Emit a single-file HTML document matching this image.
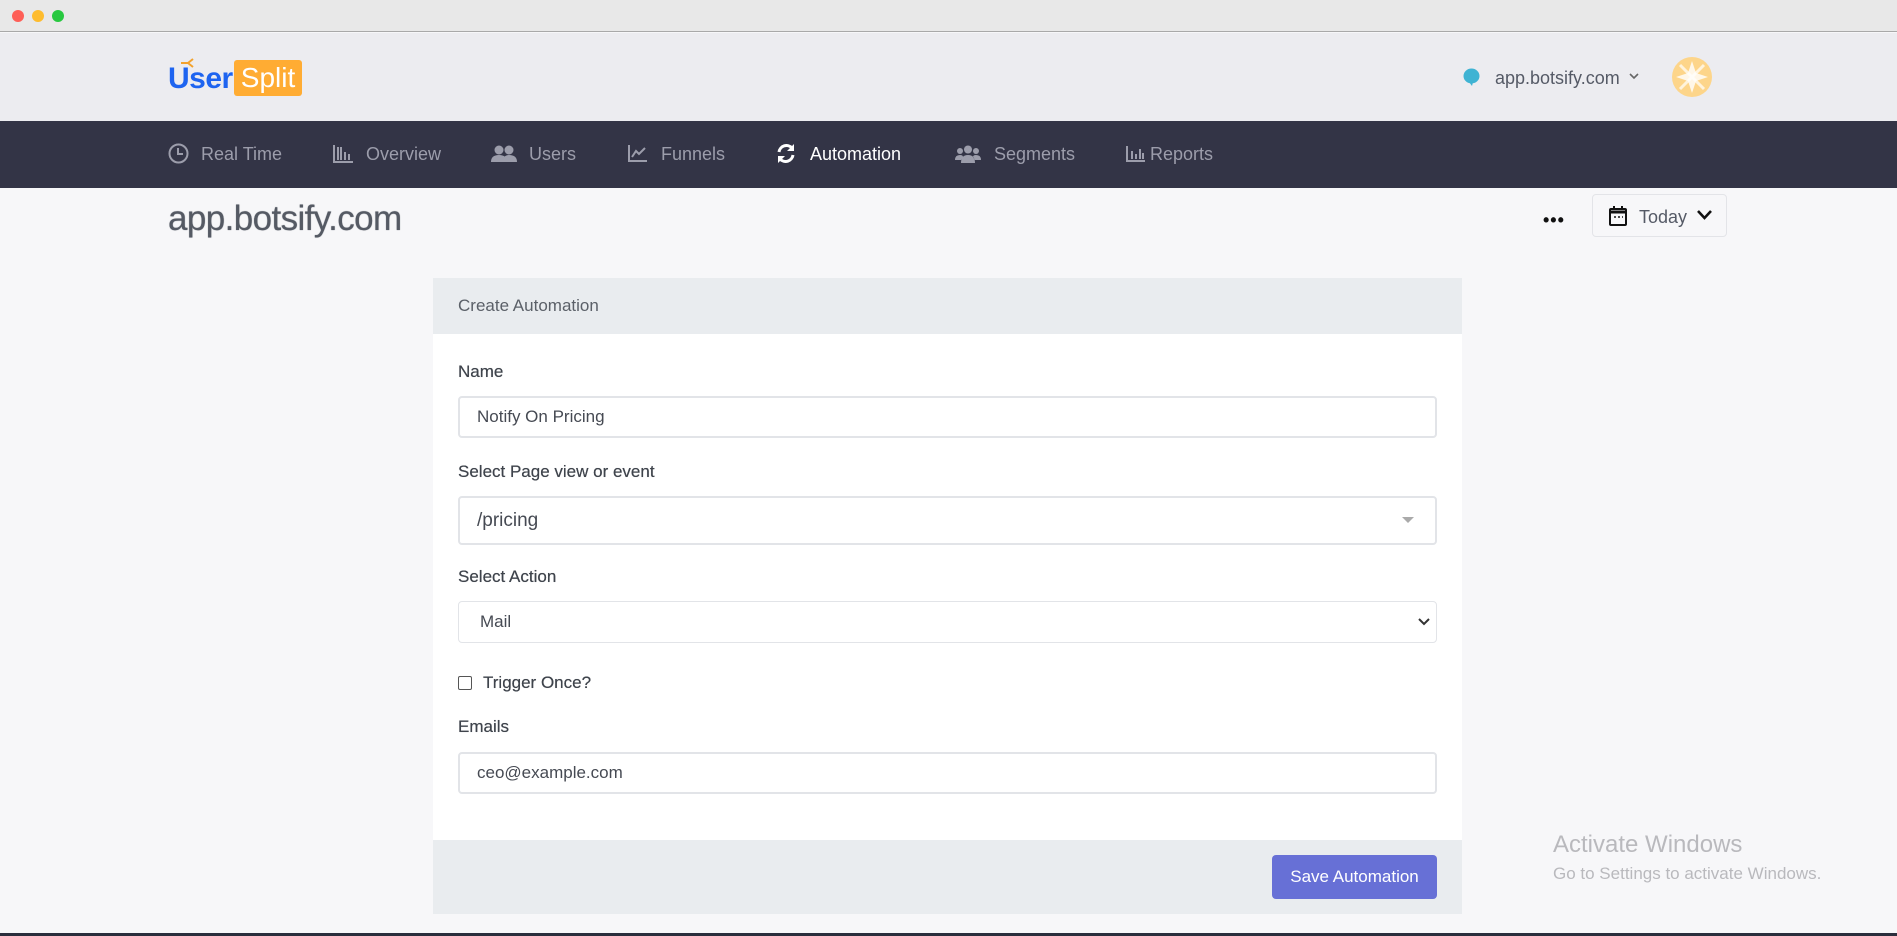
<!DOCTYPE html>
<html><head><meta charset="utf-8"><style>
*{margin:0;padding:0;box-sizing:border-box}
body{width:1897px;height:936px;overflow:hidden;background:#f7f7f9;font-family:"Liberation Sans",sans-serif;position:relative}
.a{position:absolute}
.tb{left:0;top:0;width:1897px;height:32px;background:#e8e8e8;border-bottom:1px solid #a9a9a9}
.dot{width:12px;height:12px;border-radius:50%;top:10px}
.hd{left:0;top:33px;width:1897px;height:88px;background:#ececf0}
.nav{left:0;top:121px;width:1897px;height:67px;background:#333446}
.ni{top:142px;font-size:18px;color:#9c9dab;line-height:24px}
.ni svg{position:absolute}
.lbl{font-size:17px;color:#3f444c;left:458px;text-shadow:0 0 0.4px #3f444c}
.inp{left:458px;width:979px;background:#fff;border:2px solid #e2e4e8;border-radius:4px;font-size:17px;color:#464a53;padding-left:17px;display:flex;align-items:center}
</style></head><body>
<div class="a tb"></div>
<div class="a dot" style="left:12px;background:#fe5f57"></div>
<div class="a dot" style="left:32px;background:#febc2e"></div>
<div class="a dot" style="left:52px;background:#28c840"></div>
<div class="a hd"></div>
<div class="a" style="left:168px;top:62px;font-size:30px;font-weight:600;color:#1e64f0;line-height:34px;letter-spacing:-0.5px">User</div>
<svg class="a" style="left:180px;top:58px" width="14" height="10"><path d="M1 5H8M8 5L13 1M8 5L13 9" stroke="#f3a22c" stroke-width="2" fill="none"/></svg>
<div class="a" style="left:234px;top:60px;width:68px;height:36px;background:#ffac33;border-radius:3px;color:#fff;font-size:28px;line-height:36px;text-align:center">Split</div>
<svg class="a" style="left:1463px;top:68px" width="17" height="19"><ellipse cx="8.5" cy="8" rx="8" ry="7.5" fill="#3fb3d3"/><path d="M6 14L9 18L10 14Z" fill="#3fb3d3"/></svg>
<div class="a" style="left:1495px;top:66px;font-size:18px;color:#555a66;line-height:24px">app.botsify.com</div>
<svg class="a" style="left:1629px;top:73px" width="10" height="7"><path d="M1 1L5 5L9 1" stroke="#666" stroke-width="1.6" fill="none"/></svg>
<div class="a" style="left:1672px;top:57px;width:40px;height:40px;border-radius:50%;background:#fdd58a;overflow:hidden">
<svg width="40" height="40"><path d="M20 4L24 16L36 20L24 24L20 36L16 24L4 20L16 16Z" fill="#fff" opacity=".8"/><path d="M8 8L32 32M32 8L8 32" stroke="#fff" stroke-width="3" opacity=".7"/></svg></div>
<div class="a nav"></div>
<div class="a ni" style="left:168px"><svg style="left:0;top:1px" width="21" height="21"><circle cx="10.5" cy="10.5" r="9" stroke="#9c9dab" stroke-width="2" fill="none"/><path d="M10 5V11H15" stroke="#9c9dab" stroke-width="2" fill="none"/></svg><span style="position:absolute;left:33px;white-space:nowrap">Real Time</span></div>
<div class="a ni" style="left:333px"><svg style="left:0;top:2px" width="21" height="19"><path d="M1 1V18H20M5 3V16M8 3V16M12 8V16M16 10V16" stroke="#9c9dab" stroke-width="2" fill="none"/></svg><span style="position:absolute;left:33px">Overview</span></div>
<div class="a ni" style="left:491px"><svg style="left:0;top:3px" width="26" height="18"><circle cx="8" cy="5" r="4.5" fill="#9c9dab"/><circle cx="18" cy="5" r="4.5" fill="#9c9dab"/><path d="M0 17Q0 10 8 10Q16 10 16 17Z M12 17Q12 10 18 10Q26 10 26 17Z" fill="#9c9dab"/></svg><span style="position:absolute;left:38px">Users</span></div>
<div class="a ni" style="left:628px"><svg style="left:0;top:2px" width="20" height="18"><path d="M1 1V17H19M4 13L8 7L11 10L17 4" stroke="#9c9dab" stroke-width="2" fill="none"/></svg><span style="position:absolute;left:33px">Funnels</span></div>
<div class="a ni" style="left:776px;color:#fff"><svg style="left:0;top:1px" width="20" height="21"><path d="M3 9A7.5 7.5 0 0 1 16 5M17 12A7.5 7.5 0 0 1 4 16" stroke="#fff" stroke-width="3" fill="none"/><path d="M18 1V8H11Z M2 20V13H9Z" fill="#fff"/></svg><span style="position:absolute;left:34px">Automation</span></div>
<div class="a ni" style="left:955px"><svg style="left:0;top:3px" width="26" height="18"><circle cx="13" cy="4.5" r="4" fill="#9c9dab"/><circle cx="5" cy="6" r="3" fill="#9c9dab"/><circle cx="21" cy="6" r="3" fill="#9c9dab"/><path d="M6 18Q6 10 13 10Q20 10 20 18Z M0 15Q0 10 5 10Q8 10 8 12L6 15Z M26 15Q26 10 21 10Q18 10 18 12L20 15Z" fill="#9c9dab"/></svg><span style="position:absolute;left:39px">Segments</span></div>
<div class="a ni" style="left:1126px"><svg style="left:0;top:3px" width="20" height="17"><path d="M1 1V16H19" stroke="#9c9dab" stroke-width="2" fill="none"/><path d="M5 6h2v8h-2zM9 9h2v5h-2zM13 4h2v10h-2zM16 8h2v6h-2z" fill="#9c9dab"/></svg><span style="position:absolute;left:24px">Reports</span></div>
<div class="a" style="left:168px;top:198px;font-size:35px;color:#555a64;line-height:42px;letter-spacing:-0.6px;text-shadow:0 0 0.8px #555a64">app.botsify.com</div>
<div class="a" style="left:1543px;top:210px;font-size:18px;color:#111;letter-spacing:1px;font-weight:bold">•••</div>
<div class="a" style="left:1592px;top:194px;width:135px;height:43px;border:1px solid #e3e4e8;border-radius:4px;background:#f7f7f9"></div>
<svg class="a" style="left:1609px;top:206px" width="18" height="20"><rect x="1" y="3" width="16" height="16" rx="1" stroke="#111" stroke-width="2" fill="none"/><path d="M1 6H17" stroke="#111" stroke-width="3"/><path d="M5 0V4M13 0V4" stroke="#111" stroke-width="2"/><path d="M5 11h2M9 11h2M13 11h1" stroke="#111" stroke-width="1.5"/></svg>
<div class="a" style="left:1639px;top:206px;font-size:18px;color:#555a66;line-height:22px">Today</div>
<svg class="a" style="left:1697px;top:210px" width="15" height="10"><path d="M1 1L7.5 8L14 1" stroke="#111" stroke-width="2.6" fill="none"/></svg>
<div class="a" style="left:433px;top:278px;width:1029px;height:636px;background:#fff"></div>
<div class="a" style="left:433px;top:278px;width:1029px;height:56px;background:#e9ecef"></div>
<div class="a" style="left:458px;top:296px;font-size:17px;color:#5b6068">Create Automation</div>
<div class="a lbl" style="top:362px">Name</div>
<div class="a inp" style="top:396px;height:42px">Notify On Pricing</div>
<div class="a lbl" style="top:462px">Select Page view or event</div>
<div class="a inp" style="top:496px;height:49px;font-size:19px">/pricing</div>
<svg class="a" style="left:1402px;top:517px" width="12" height="7"><path d="M0 0H12L6 6Z" fill="#aaa"/></svg>
<div class="a lbl" style="top:567px">Select Action</div>
<div class="a inp" style="top:601px;height:42px;border-width:1px;padding-left:21px;font-size:17px">Mail</div>
<svg class="a" style="left:1418px;top:618px" width="12" height="8"><path d="M1 1L6 6L11 1" stroke="#333" stroke-width="2" fill="none"/></svg>
<div class="a" style="left:458px;top:676px;width:14px;height:14px;border:1px solid #555;border-radius:2px;background:#fff"></div>
<div class="a lbl" style="left:483px;top:673px">Trigger Once?</div>
<div class="a lbl" style="top:717px">Emails</div>
<div class="a inp" style="top:752px;height:42px">ceo@example.com</div>
<div class="a" style="left:433px;top:840px;width:1029px;height:74px;background:#e9ecef"></div>
<div class="a" style="left:1272px;top:855px;width:165px;height:44px;background:#6770d6;border-radius:4px;color:#fff;font-size:17px;line-height:44px;text-align:center">Save Automation</div>
<div class="a" style="left:1553px;top:831px;font-size:24px;color:#b9b9bd">Activate Windows</div>
<div class="a" style="left:1553px;top:864px;font-size:17px;color:#b9b9bd">Go to Settings to activate Windows.</div>
<div class="a" style="left:0;top:933px;width:1897px;height:3px;background:#2a2e3c"></div>
</body></html>
